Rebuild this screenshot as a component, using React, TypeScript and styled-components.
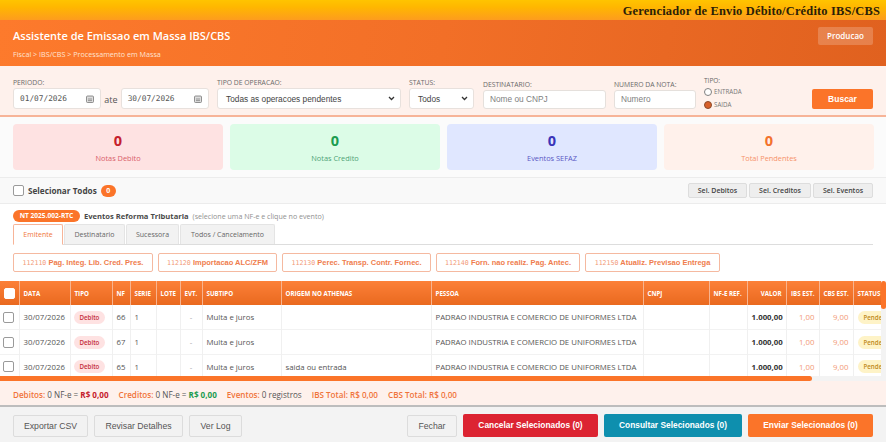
import styled, { createGlobalStyle } from 'styled-components';

const GlobalStyle = createGlobalStyle`
  html, body {
    margin: 0;
    padding: 0;
    background: #fff;
  }
  body {
    font-family: "Open Sans", "Noto Sans", sans-serif;
    overflow: hidden;
  }
  * {
    box-sizing: border-box;
  }
`;

const Page = styled.div`
  width: 886px;
  height: 442px;
  display: flex;
  flex-direction: column;
  overflow: hidden;
`;

const TopBar = styled.div`
  height: 20px;
  flex: none;
  display: flex;
  align-items: center;
  justify-content: flex-end;
  padding: 2px 6px 0 0;
  background: linear-gradient(180deg, #ffc400 0%, #ffb700 35%, #fd9c1e 100%);
  font-family: "Liberation Serif", "DejaVu Serif", serif;
  font-weight: 700;
  font-size: 12.4px;
  letter-spacing: 0.2px;
  color: #2b2008;
`;

const Header = styled.header`
  height: 46px;
  flex: none;
  display: flex;
  justify-content: space-between;
  padding: 8px 13px 7px;
  background: linear-gradient(100deg, #fd7a2c 0%, #f26f27 50%, #e0611f 100%);
  color: #fff;
`;

const HeaderTitle = styled.div`
  font-size: 11px;
  font-weight: 600;
  line-height: 16px;
`;

const Breadcrumb = styled.div`
  font-size: 7.2px;
  line-height: 10px;
  margin-top: 5px;
  color: #ffe3d3;
`;

const EnvBadge = styled.div`
  width: 55px;
  height: 18px;
  margin-top: -1px;
  border-radius: 2px;
  background: rgba(255, 255, 255, 0.2);
  font-size: 8px;
  font-weight: 600;
  line-height: 18px;
  text-align: center;
`;

const FilterBar = styled.div`
  height: 51px;
  flex: none;
  display: flex;
  align-items: flex-end;
  padding: 0 13px 6px;
  background: #fef1ec;
  border-bottom: 2px solid #f7b498;
`;

const Field = styled.div<{ $w: number; $ml?: number }>`
  width: ${(p) => p.$w}px;
  margin-left: ${(p) => p.$ml ?? 0}px;
  flex: none;
`;

const FieldLabel = styled.div`
  font-size: 6.8px;
  line-height: 9px;
  margin-bottom: 1px;
  color: #6a6a6a;
  white-space: nowrap;
`;

const DateRow = styled.div`
  display: flex;
  align-items: center;
`;

const DateBox = styled.div`
  width: 88.5px;
  height: 21px;
  display: flex;
  align-items: center;
  justify-content: space-between;
  padding: 0 6px;
  background: #fff;
  border: 1px solid #e8e1dd;
  border-radius: 3px;
  font-family: "DejaVu Sans Mono", "Liberation Mono", monospace;
  font-size: 7.8px;
  color: #555;
`;

const Ate = styled.span`
  font-size: 9px;
  color: #555;
  margin: 1px 3px 0;
`;

const SelectBox = styled.div`
  height: 21px;
  display: flex;
  align-items: center;
  justify-content: space-between;
  padding: 0 5px 0 8px;
  background: #fff;
  border: 1px solid #e8e1dd;
  border-radius: 3px;
  font-family: "Liberation Sans", Arial, sans-serif;
  font-size: 8.3px;
  color: #444;
`;

const TextInput = styled.div`
  height: 19px;
  padding: 0 6px;
  background: #fff;
  border: 1px solid #e5e0dc;
  border-radius: 3px;
  font-family: "Liberation Sans", Arial, sans-serif;
  font-size: 8.3px;
  line-height: 17px;
  color: #808080;
`;

const RadioGroup = styled.div`
  width: 100px;
  margin: 0 0 -2px 8px;
  flex: none;
`;

const RadioLabel = styled.div`
  font-size: 6.5px;
  line-height: 8px;
  color: #666;
`;

const RadioRow = styled.div`
  display: flex;
  align-items: center;
  height: 13px;
  gap: 2px;
  font-size: 6.2px;
  color: #777;
`;

const RadioDot = styled.span<{ $on?: boolean }>`
  width: 8px;
  height: 8px;
  border-radius: 50%;
  background: ${(p) => (p.$on ? '#d8602a' : '#fff')};
  border: 1px solid ${(p) => (p.$on ? '#8a4a2a' : '#808080')};
`;

const SearchButton = styled.div`
  width: 61px;
  height: 20px;
  margin-left: auto;
  border-radius: 2px;
  background: #fb7429;
  color: #fff;
  font-family: "Liberation Sans", Arial, sans-serif;
  font-size: 8.5px;
  font-weight: 700;
  line-height: 20px;
  text-align: center;
`;

const StatsRow = styled.div`
  height: 60px;
  flex: none;
  display: grid;
  grid-template-columns: repeat(4, 210px);
  gap: 7px;
  padding: 7px 13px 0;
  background: #fbfbfb;
`;

const StatCard = styled.div<{ $bg: string }>`
  height: 46px;
  border-radius: 4px;
  background: ${(p) => p.$bg};
  text-align: center;
  padding-top: 7px;
`;

const StatValue = styled.div<{ $color: string }>`
  font-size: 14.5px;
  font-weight: 700;
  line-height: 20px;
  color: ${(p) => p.$color};
`;

const StatLabel = styled.div<{ $color: string }>`
  font-size: 7.4px;
  line-height: 11px;
  margin-top: 2px;
  color: ${(p) => p.$color};
`;

const SelectionBar = styled.div`
  height: 27px;
  flex: none;
  display: flex;
  align-items: center;
  padding: 0 13px;
  background: #f9f9f9;
  border-top: 1px solid #ececec;
  border-bottom: 1px solid #ececec;
`;

const Check = styled.span<{ $head?: boolean }>`
  display: block;
  flex: none;
  width: 11px;
  height: 11px;
  background: #fff;
  border: 1px solid ${(p) => (p.$head ? '#fff' : '#9a9a9a')};
  border-radius: 2px;
`;

const SelectAll = styled.span`
  margin-left: 4px;
  font-size: 8.2px;
  font-weight: 700;
  color: #444;
`;

const CountPill = styled.span`
  width: 15px;
  height: 12px;
  margin-left: 4px;
  border-radius: 7px;
  background: #fb7429;
  color: #fff;
  font-size: 7px;
  font-weight: 700;
  line-height: 12px;
  text-align: center;
`;

const SelectionActions = styled.div`
  display: flex;
  gap: 2px;
  margin-left: auto;
`;

const SmallButton = styled.div<{ $w: number }>`
  width: ${(p) => p.$w}px;
  height: 15px;
  background: #eee;
  border: 1px solid #ddd;
  border-radius: 2px;
  font-size: 7px;
  font-weight: 600;
  line-height: 13px;
  text-align: center;
  color: #444;
`;

const EventsPanel = styled.div`
  height: 77px;
  flex: none;
  padding: 5px 13px 0;
  background: #fff;
`;

const EventsHead = styled.div`
  display: flex;
  align-items: center;
  height: 13px;
`;

const NtPill = styled.span`
  width: 67px;
  height: 12px;
  border-radius: 6px;
  background: #fb7429;
  color: #fff;
  font-size: 6.6px;
  font-weight: 700;
  line-height: 12px;
  text-align: center;
  white-space: nowrap;
`;

const EventsTitle = styled.span`
  margin-left: 4px;
  font-size: 7.6px;
  font-weight: 700;
  color: #4a4a4a;
`;

const EventsHint = styled.span`
  margin-left: 4px;
  font-size: 7.1px;
  color: #909090;
`;

const Tabs = styled.div`
  display: flex;
  gap: 1px;
  height: 21px;
  margin-top: 2px;
  border-bottom: 1px solid #ddd;
`;

const Tab = styled.div<{ $active?: boolean; $w: number }>`
  width: ${(p) => p.$w}px;
  height: ${(p) => (p.$active ? 21 : 20)}px;
  background: ${(p) => (p.$active ? '#fff' : '#f2f2f2')};
  border: 1px solid ${(p) => (p.$active ? '#f7b498' : '#e4e4e4')};
  border-bottom: ${(p) => (p.$active ? '1px solid #fff' : 'none')};
  border-radius: 2px 2px 0 0;
  font-size: 7px;
  line-height: 19px;
  text-align: center;
  color: ${(p) => (p.$active ? '#f0763a' : '#666')};
`;

const Chips = styled.div`
  display: flex;
  gap: 5px;
  margin-top: 8px;
`;

const Chip = styled.div<{ $w: number }>`
  width: ${(p) => p.$w}px;
  height: 19px;
  background: #fff;
  border: 1px solid #f5b9a0;
  border-radius: 2px;
  font-family: "Liberation Sans", Arial, sans-serif;
  font-size: 7.5px;
  font-weight: 700;
  line-height: 17px;
  text-align: center;
  color: #ef7d4d;
  white-space: nowrap;
`;

const ChipCode = styled.span`
  font-family: "DejaVu Sans Mono", "Liberation Mono", monospace;
  font-weight: 400;
  font-size: 6.6px;
  color: #f29a78;
`;

const TableWrap = styled.div`
  position: relative;
  height: 100px;
  flex: none;
  overflow: hidden;
  background: #fff;
`;

const DataTable = styled.table`
  width: 881px;
  table-layout: fixed;
  border-collapse: collapse;
`;

const HeadCell = styled.th<{ $align?: string }>`
  height: 24px;
  padding: 0 4px;
  background: linear-gradient(180deg, #fc8038 0%, #e9691f 100%);
  border-right: 1px solid #f8b48f;
  color: #fff;
  font-size: 6.2px;
  font-weight: 700;
  text-align: ${(p) => p.$align ?? 'left'};
  white-space: nowrap;
  overflow: hidden;
`;

const Row = styled.tr`
  height: 24.7px;
  border-bottom: 1px solid #f2f2f2;
`;

const Cell = styled.td<{ $align?: string; $color?: string; $bold?: boolean; $flush?: boolean }>`
  padding: 0 ${(p) => (p.$flush ? 3 : 4)}px;
  border-right: 1px solid #f0f0f0;
  font-size: 7.8px;
  font-weight: ${(p) => (p.$bold ? 700 : 400)};
  color: ${(p) => p.$color ?? '#555'};
  text-align: ${(p) => p.$align ?? 'left'};
  white-space: nowrap;
  overflow: hidden;
`;

const Pill = styled.span<{ $bg: string; $color: string }>`
  display: inline-block;
  height: 13px;
  padding: 0 6px;
  border-radius: 7px;
  background: ${(p) => p.$bg};
  color: ${(p) => p.$color};
  font-size: 6.2px;
  font-weight: 600;
  line-height: 13px;
`;

const StatusClip = styled.div`
  width: 24px;
  overflow: hidden;
`;

const ScrollTrackX = styled.div`
  position: absolute;
  left: 0;
  bottom: 0;
  width: 886px;
  height: 5px;
  background: #f3f3f3;
`;

const ScrollThumbX = styled.div`
  width: 812px;
  height: 5px;
  border-radius: 0 3px 3px 0;
  background: #fb7429;
`;

const ScrollTrackY = styled.div`
  position: absolute;
  top: 0;
  right: 0;
  width: 5px;
  height: 95px;
  background: #f3f3f3;
`;

const ScrollThumbY = styled.div`
  height: 28px;
  border-radius: 3px;
  background: #fb7429;
`;

const Totals = styled.div`
  height: 26px;
  flex: none;
  display: flex;
  align-items: center;
  gap: 10px;
  padding: 3px 13px 0;
  background: #fef1ec;
  border-bottom: 2px solid #bdbdbd;
  font-size: 8.1px;
  color: #555;
`;

const TotalKey = styled.span`
  font-weight: 600;
  color: #f0743a;
`;

const TotalValue = styled.span<{ $color: string }>`
  font-weight: 700;
  color: ${(p) => p.$color};
`;

const Footer = styled.div`
  flex: 1;
  display: flex;
  align-items: center;
  gap: 6px;
  padding: 2px 13px 0;
  background: #f3f3f3;
`;

const GhostButton = styled.div<{ $push?: boolean; $w: number }>`
  width: ${(p) => p.$w}px;
  height: 22px;
  margin-left: ${(p) => (p.$push ? 'auto' : '0')};
  background: #f2f2f2;
  border: 1px solid #dcdcdc;
  border-radius: 2px;
  font-family: "Liberation Sans", Arial, sans-serif;
  font-size: 8.7px;
  font-weight: 400;
  line-height: 20px;
  text-align: center;
  color: #555;
`;

const ActionButton = styled.div<{ $bg: string; $w: number }>`
  width: ${(p) => p.$w}px;
  height: 23px;
  background: ${(p) => p.$bg};
  border-radius: 2px;
  color: #fff;
  font-family: "Liberation Sans", Arial, sans-serif;
  font-size: 8.4px;
  font-weight: 700;
  line-height: 23px;
  text-align: center;
`;

const CalendarIcon = () => (
  <svg width="8" height="8" viewBox="0 0 8 8">
    <rect x="0.5" y="1" width="7" height="6.5" rx="1" fill="#ddd" stroke="#777" strokeWidth="0.8" />
    <path d="M2 4h4M2 5.6h4" stroke="#777" strokeWidth="0.7" />
  </svg>
);

const Chevron = () => (
  <svg width="7" height="5" viewBox="0 0 7 5">
    <path d="M1 1l2.5 2.5L6 1" fill="none" stroke="#333" strokeWidth="1.3" />
  </svg>
);

const columns = [
  { label: '', w: 19 },
  { label: 'DATA', w: 51 },
  { label: 'TIPO', w: 42 },
  { label: 'NF', w: 18 },
  { label: 'SERIE', w: 26 },
  { label: 'LOTE', w: 24 },
  { label: 'EVT.', w: 22 },
  { label: 'SUBTIPO', w: 79 },
  { label: 'ORIGEM NO ATHENAS', w: 150 },
  { label: 'PESSOA', w: 212 },
  { label: 'CNPJ', w: 66 },
  { label: 'NF-E REF.', w: 38 },
  { label: 'VALOR', w: 39, align: 'right' },
  { label: 'IBS EST.', w: 33, align: 'right' },
  { label: 'CBS EST.', w: 34, align: 'right' },
  { label: 'STATUS', w: 28 },
];

const rows = [
  { nf: '66', origem: '' },
  { nf: '67', origem: '' },
  { nf: '65', origem: 'saida ou entrada' },
];

const chips = [
  { code: '112110', label: 'Pag. Integ. Lib. Cred. Pres.', w: 140 },
  { code: '112120', label: 'Importacao ALC/ZFM', w: 119 },
  { code: '112130', label: 'Perec. Transp. Contr. Fornec.', w: 149 },
  { code: '112140', label: 'Forn. nao realiz. Pag. Antec.', w: 144 },
  { code: '112150', label: 'Atualiz. Previsao Entrega', w: 135 },
];

const stats = [
  { value: '0', label: 'Notas Debito', bg: '#fee2e2', color: '#c5202c', labelColor: '#d9606a' },
  { value: '0', label: 'Notas Credito', bg: '#dcfce7', color: '#1c9c50', labelColor: '#4fa377' },
  { value: '0', label: 'Eventos SEFAZ', bg: '#e0e7ff', color: '#3a34b8', labelColor: '#5a58c4' },
  { value: '0', label: 'Total Pendentes', bg: '#fff1eb', color: '#f3722c', labelColor: '#f6926a' },
];

export default function App() {
  return (
    <Page>
      <GlobalStyle />
      <TopBar>Gerenciador de Envio Débito/Crédito IBS/CBS</TopBar>
      <Header>
        <div>
          <HeaderTitle>Assistente de Emissao em Massa IBS/CBS</HeaderTitle>
          <Breadcrumb>Fiscal &gt; IBS/CBS &gt; Processamento em Massa</Breadcrumb>
        </div>
        <EnvBadge>Producao</EnvBadge>
      </Header>

      <FilterBar>
        <Field $w={196}>
          <FieldLabel>PERIODO:</FieldLabel>
          <DateRow>
            <DateBox>01/07/2026<CalendarIcon /></DateBox>
            <Ate>ate</Ate>
            <DateBox>30/07/2026<CalendarIcon /></DateBox>
          </DateRow>
        </Field>
        <Field $w={184} $ml={8}>
          <FieldLabel>TIPO DE OPERACAO:</FieldLabel>
          <SelectBox>Todas as operacoes pendentes<Chevron /></SelectBox>
        </Field>
        <Field $w={65} $ml={8}>
          <FieldLabel>STATUS:</FieldLabel>
          <SelectBox>Todos<Chevron /></SelectBox>
        </Field>
        <Field $w={123} $ml={9}>
          <FieldLabel>DESTINATARIO:</FieldLabel>
          <TextInput>Nome ou CNPJ</TextInput>
        </Field>
        <Field $w={82} $ml={8}>
          <FieldLabel>NUMERO DA NOTA:</FieldLabel>
          <TextInput>Numero</TextInput>
        </Field>
        <RadioGroup>
          <RadioLabel>TIPO:</RadioLabel>
          <RadioRow><RadioDot />ENTRADA</RadioRow>
          <RadioRow><RadioDot $on />SAIDA</RadioRow>
        </RadioGroup>
        <SearchButton>Buscar</SearchButton>
      </FilterBar>

      <StatsRow>
        {stats.map((s) => (
          <StatCard key={s.label} $bg={s.bg}>
            <StatValue $color={s.color}>{s.value}</StatValue>
            <StatLabel $color={s.labelColor}>{s.label}</StatLabel>
          </StatCard>
        ))}
      </StatsRow>

      <SelectionBar>
        <Check />
        <SelectAll>Selecionar Todos</SelectAll>
        <CountPill>0</CountPill>
        <SelectionActions>
          <SmallButton $w={59}>Sel. Debitos</SmallButton>
          <SmallButton $w={62}>Sel. Creditos</SmallButton>
          <SmallButton $w={60}>Sel. Eventos</SmallButton>
        </SelectionActions>
      </SelectionBar>

      <EventsPanel>
        <EventsHead>
          <NtPill>NT 2025.002-RTC</NtPill>
          <EventsTitle>Eventos Reforma Tributaria</EventsTitle>
          <EventsHint>(selecione uma NF-e e clique no evento)</EventsHint>
        </EventsHead>
        <Tabs>
          <Tab $active $w={50}>Emitente</Tab>
          <Tab $w={61}>Destinatario</Tab>
          <Tab $w={53}>Sucessora</Tab>
          <Tab $w={95}>Todos / Cancelamento</Tab>
        </Tabs>
        <Chips>
          {chips.map((c) => (
            <Chip key={c.code} $w={c.w}><ChipCode>{c.code}</ChipCode> {c.label}</Chip>
          ))}
        </Chips>
      </EventsPanel>

      <TableWrap>
        <DataTable>
          <colgroup>
            {columns.map((c, i) => <col key={i} width={c.w} />)}
          </colgroup>
          <thead>
            <tr>
              {columns.map((c, i) => (
                <HeadCell key={i} $align={c.align}>
                  {i === 0 ? <Check $head /> : c.label}
                </HeadCell>
              ))}
            </tr>
          </thead>
          <tbody>
            {rows.map((r) => (
              <Row key={r.nf}>
                <Cell $flush><Check /></Cell>
                <Cell>30/07/2026</Cell>
                <Cell $flush><Pill $bg="#fee2e2" $color="#c5303c">Debito</Pill></Cell>
                <Cell>{r.nf}</Cell>
                <Cell>1</Cell>
                <Cell />
                <Cell $align="center" $color="#aaa">-</Cell>
                <Cell>Multa e juros</Cell>
                <Cell>{r.origem}</Cell>
                <Cell>PADRAO INDUSTRIA E COMERCIO DE UNIFORMES LTDA</Cell>
                <Cell />
                <Cell />
                <Cell $align="right" $bold $color="#333">1.000,00</Cell>
                <Cell $align="right" $color="#f29a78">1,00</Cell>
                <Cell $align="right" $color="#f29a78">9,00</Cell>
                <Cell><StatusClip><Pill $bg="#fef3c7" $color="#c08a1c">Pendente</Pill></StatusClip></Cell>
              </Row>
            ))}
          </tbody>
        </DataTable>
        <ScrollTrackY><ScrollThumbY /></ScrollTrackY>
        <ScrollTrackX><ScrollThumbX /></ScrollTrackX>
      </TableWrap>

      <Totals>
        <span><TotalKey>Debitos:</TotalKey> 0 NF-e = <TotalValue $color="#c5202c">R$ 0,00</TotalValue></span>
        <span><TotalKey>Creditos:</TotalKey> 0 NF-e = <TotalValue $color="#1c9c50">R$ 0,00</TotalValue></span>
        <span><TotalKey>Eventos:</TotalKey> 0 registros</span>
        <TotalKey>IBS Total: R$ 0,00</TotalKey>
        <TotalKey>CBS Total: R$ 0,00</TotalKey>
      </Totals>

      <Footer>
        <GhostButton $w={75}>Exportar CSV</GhostButton>
        <GhostButton $w={89}>Revisar Detalhes</GhostButton>
        <GhostButton $w={53}>Ver Log</GhostButton>
        <GhostButton $push $w={50}>Fechar</GhostButton>
        <ActionButton $bg="#dc2432" $w={135}>Cancelar Selecionados (0)</ActionButton>
        <ActionButton $bg="#0e8fae" $w={138}>Consultar Selecionados (0)</ActionButton>
        <ActionButton $bg="#fb7429" $w={125}>Enviar Selecionados (0)</ActionButton>
      </Footer>
    </Page>
  );
}
